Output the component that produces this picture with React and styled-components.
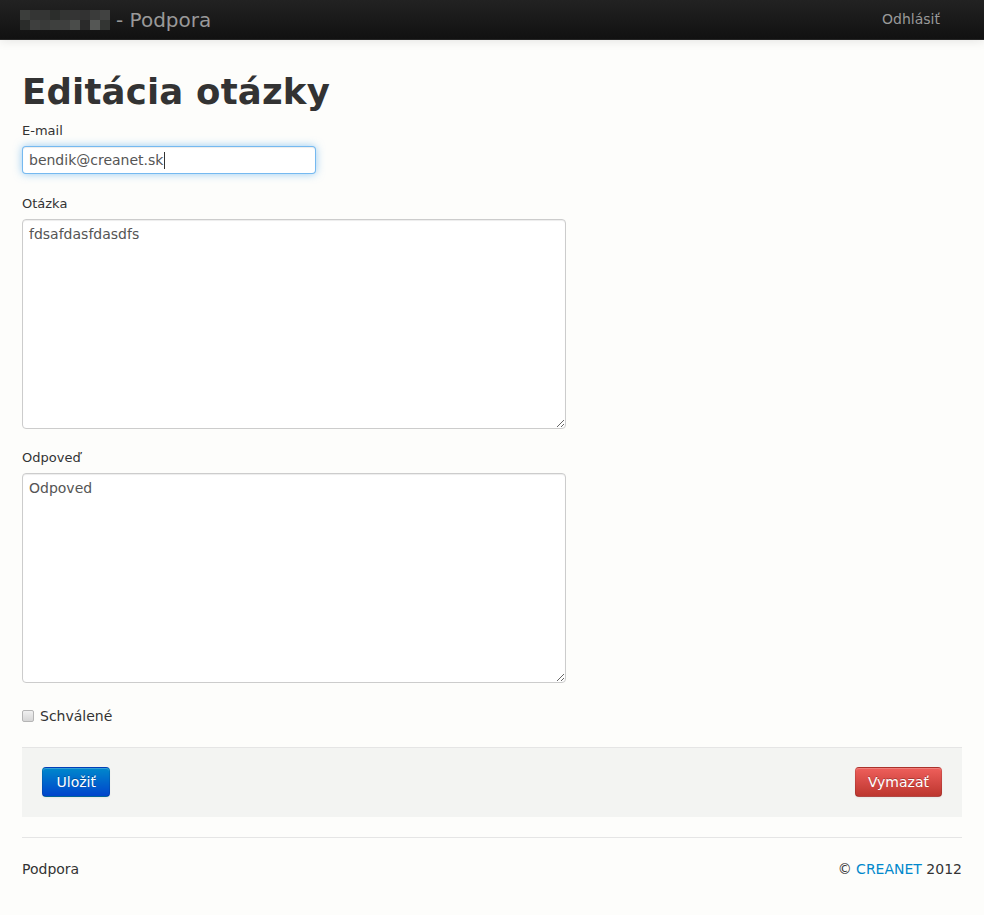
import React from "react";
import styled, { createGlobalStyle } from "styled-components";

const GlobalStyle = createGlobalStyle`
  html, body {
    margin: 0;
    padding: 0;
    background: #fdfdfb;
    color: #333;
    font-family: "DejaVu Sans", Verdana, sans-serif;
    font-size: 14px;
    line-height: 20px;
  }
`;

const Navbar = styled.div`
  height: 40px;
  background: linear-gradient(to bottom, #222222, #111111);
  border-bottom: 1px solid #252525;
  box-shadow: 0 1px 10px rgba(0, 0, 0, 0.1);
  box-sizing: border-box;
`;

const Container = styled.div`
  width: 940px;
  margin: 0 auto;
`;

const NavInner = styled(Container)`
  display: flex;
  align-items: center;
  justify-content: space-between;
  height: 40px;
`;

const Brand = styled.a`
  display: flex;
  align-items: center;
  gap: 6px;
  margin-left: -2px;
  color: #999;
  font-size: 20px;
  line-height: 20px;
  text-decoration: none;
`;

const Mosaic = styled.div`
  display: grid;
  grid-template-columns: repeat(9, 10px);
  grid-template-rows: repeat(2, 10px);
`;

const Tile = styled.span`
  background: ${(p) => p.$c};
`;

const NavLink = styled.a`
  color: #999;
  font-size: 14px;
  text-decoration: none;
  margin-right: 22px;
  padding-bottom: 2px;
`;

const Title = styled.h1`
  margin: 31px 0 0;
  font-size: 35.5px;
  line-height: 42px;
  font-weight: bold;
  color: #333;
  letter-spacing: 0.2px;
`;

const Form = styled.form`
  display: flex;
  flex-direction: column;
  margin-top: 8px;
`;

const Group = styled.div`
  display: flex;
  flex-direction: column;
  align-items: flex-start;
  margin-bottom: ${(p) => p.$mb || 20}px;
`;

const Label = styled.label`
  display: block;
  font-size: 13px;
  line-height: 20px;
  color: #333;
  margin-bottom: 5px;
`;

const FakeInput = styled.div`
  box-sizing: border-box;
  width: 294px;
  height: 28px;
  padding: 0 6px;
  display: flex;
  align-items: center;
  font-size: 14px;
  color: #555;
  background: #fff;
  border: 1px solid rgba(82, 168, 236, 0.8);
  border-radius: 4px;
  box-shadow: inset 0 1px 1px rgba(0, 0, 0, 0.075),
    0 0 8px rgba(82, 168, 236, 0.6);
`;

const Caret = styled.span`
  display: inline-block;
  width: 1px;
  height: 17px;
  background: #333;
  margin-left: 1px;
`;

const TextArea = styled.textarea`
  box-sizing: border-box;
  width: 544px;
  height: 210px;
  padding: 4px 6px;
  font-family: "DejaVu Sans", Verdana, sans-serif;
  font-size: 14px;
  line-height: 20px;
  color: #555;
  background: #fff;
  border: 1px solid #ccc;
  border-radius: 4px;
  box-shadow: inset 0 1px 1px rgba(0, 0, 0, 0.075);
  outline: none;
`;

const CheckRow = styled.label`
  display: flex;
  align-items: center;
  gap: 6px;
  font-size: 14px;
  line-height: 20px;
  color: #333;
`;

const Check = styled.input`
  appearance: none;
  margin: 0;
  width: 12px;
  height: 12px;
  border: 1px solid #b5b5b5;
  border-radius: 2px;
  background: linear-gradient(to bottom, #f0f0f0, #d6d6d6);
  box-sizing: border-box;
`;

const Actions = styled.div`
  display: flex;
  justify-content: space-between;
  align-items: center;
  margin-top: 21px;
  padding: 19px 20px 20px;
  background: #f3f4f2;
  border-top: 1px solid #e5e5e5;
`;

const Button = styled.button`
  font-family: "DejaVu Sans", Verdana, sans-serif;
  font-size: 14px;
  font-weight: normal;
  line-height: 20px;
  padding: 4px ${(p) => p.$px || 12}px;
  color: #fff;
  border: 1px solid rgba(0, 0, 0, 0.1);
  border-bottom-color: rgba(0, 0, 0, 0.25);
  border-radius: 4px;
  text-shadow: 0 -1px 0 rgba(0, 0, 0, 0.25);
  box-shadow: inset 0 1px 0 rgba(255, 255, 255, 0.2),
    0 1px 2px rgba(0, 0, 0, 0.05);
  background: ${(p) =>
    p.$danger
      ? "linear-gradient(to bottom, #ee5f5b, #bd362f)"
      : "linear-gradient(to bottom, #0088cc, #0044cc)"};
  cursor: pointer;
`;

const Rule = styled.hr`
  margin: 20px 0 0;
  border: 0;
  border-top: 1px solid #e5e5e5;
`;

const Footer = styled.footer`
  display: flex;
  justify-content: space-between;
  padding: 21px 0 20px;
  font-size: 14px;
  line-height: 20px;
  color: #333;
`;

const Link = styled.a`
  color: #0088cc;
  text-decoration: none;
`;

const tiles = [
  "#3c3e3c", "#343534", "#343534", "#2b2d2b", "#333433", "#343434", "#323232", "#3a3b3a", "#414241",
  "#2a2c2a", "#3e3f3e", "#393a39", "#3e403e", "#3e3f3e", "#4a4c4a", "#2a2a2a", "#555755", "#333533",
];

export default function App() {
  return (
    <>
      <GlobalStyle />
      <Navbar>
        <NavInner>
          <Brand href="#">
            <Mosaic>
              {tiles.map((c, i) => (
                <Tile key={i} $c={c} />
              ))}
            </Mosaic>
            - Podpora
          </Brand>
          <NavLink href="#">Odhlásiť</NavLink>
        </NavInner>
      </Navbar>
      <Container>
        <Title>Editácia otázky</Title>
        <Form onSubmit={(e) => e.preventDefault()}>
          <Group>
            <Label>E-mail</Label>
            <FakeInput>
              bendik@creanet.sk
              <Caret />
            </FakeInput>
          </Group>
          <Group $mb={19}>
            <Label>Otázka</Label>
            <TextArea defaultValue="fdsafdasfdasdfs" />
          </Group>
          <Group $mb={23}>
            <Label>Odpoveď</Label>
            <TextArea defaultValue="Odpoved" />
          </Group>
          <CheckRow>
            <Check type="checkbox" />
            Schválené
          </CheckRow>
          <Actions>
            <Button type="submit" $px={13.5}>
              Uložiť
            </Button>
            <Button type="button" $danger>
              Vymazať
            </Button>
          </Actions>
        </Form>
        <Rule />
        <Footer>
          <span>Podpora</span>
          <span>
            © <Link href="#">CREANET</Link> 2012
          </span>
        </Footer>
      </Container>
    </>
  );
}
